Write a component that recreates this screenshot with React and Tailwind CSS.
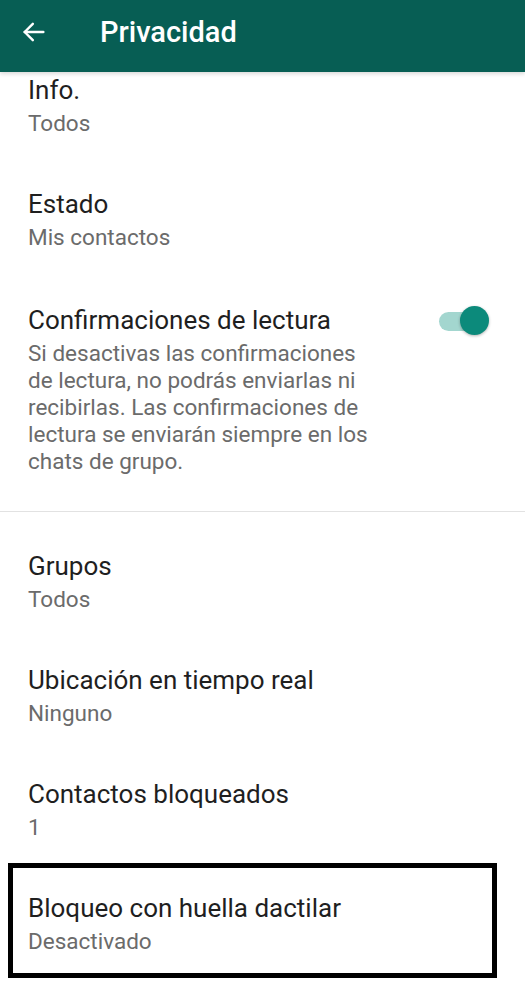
import React from "react";

function Item({ title, sub, className = "" }) {
  return (
    <div className={`px-7 ${className}`}>
      <div className="text-[26px] leading-[36px] text-[#1f1f1f]">{title}</div>
      <div className="text-[22.5px] leading-[30px] text-[#6b6b6b]">{sub}</div>
    </div>
  );
}

export default function App() {
  return (
    <div className="w-[525px] h-[984px] overflow-hidden bg-white" style={{ fontFamily: "Roboto, 'Noto Sans', sans-serif" }}>
      <div className="h-[72px] bg-[#075e54] flex items-center pb-[8px] shadow-[0_2px_4px_rgba(0,0,0,0.15)] relative z-10">
        <div className="w-[100px] flex items-center pl-[20px]">
          <svg width="28" height="28" viewBox="0 0 24 24" fill="none" stroke="white" strokeWidth="2.1" strokeLinecap="round" strokeLinejoin="round">
            <path d="M20 12H4" />
            <path d="M11 5l-7 7 7 7" />
          </svg>
        </div>
        <div className="text-white text-[29px] font-medium leading-none">Privacidad</div>
      </div>

      <Item title="Info." sub="Todos" className="pb-6" />
      <Item title="Estado" sub="Mis contactos" className="py-6" />

      <div className="px-7 pt-[26px] pb-[36px] flex border-b border-[#e2e2e2]">
        <div className="flex-1">
          <div className="text-[26px] leading-[36px] text-[#1f1f1f]">Confirmaciones de lectura</div>
          <div className="mt-[2px] text-[22.5px] leading-[27px] text-[#6b6b6b] w-[352px]">
            Si desactivas las confirmaciones de lectura, no podrás enviarlas ni recibirlas. Las confirmaciones de lectura se enviarán siempre en los chats de grupo.
          </div>
        </div>
        <div className="w-[60px] flex justify-end pt-[5px] pr-[12px]">
          <div className="relative w-[46px] h-[28px] flex items-center">
            <div className="w-[40px] h-[19px] rounded-full bg-[#a3d6cf]" />
            <div className="absolute right-[-4px] top-[-1px] w-[29px] h-[29px] rounded-full bg-[#0c8a7b] shadow-[0_1px_3px_rgba(0,0,0,0.3)]" />
          </div>
        </div>
      </div>

      <Item title="Grupos" sub="Todos" className="pt-[36px] pb-6" />
      <Item title="Ubicación en tiempo real" sub="Ninguno" className="py-6" />
      <Item title="Contactos bloqueados" sub="1" className="pt-6 pb-[21px]" />

      <div className="ml-[8px] w-[489px] border-[5px] border-black pl-[15px] pt-[22px] pb-[17px]">
        <div className="text-[26px] leading-[36px] text-[#1f1f1f]">Bloqueo con huella dactilar</div>
        <div className="text-[22.5px] leading-[30px] text-[#6b6b6b]">Desactivado</div>
      </div>
    </div>
  );
}
